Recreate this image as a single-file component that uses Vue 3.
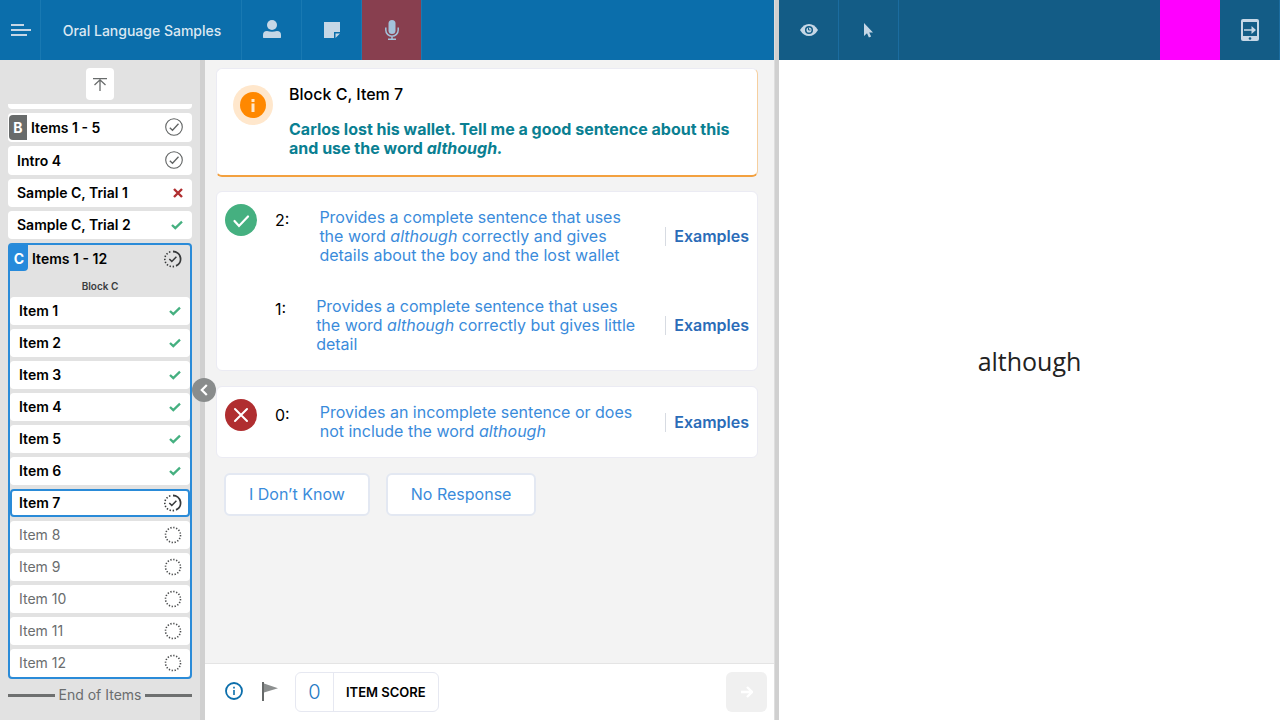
<script setup>
import { ref } from 'vue'

const earlier = [
  { label: 'Items 1 - 5', badge: 'B', state: 'complete', tall: true },
  { label: 'Intro 4', state: 'complete', tall: true },
  { label: 'Sample C, Trial 1', state: 'wrong' },
  { label: 'Sample C, Trial 2', state: 'right' }
]
const current = ref(7)
const items = Array.from({ length: 12 }, (_, i) => i + 1)
const stateOf = (n) => (n < current.value ? 'right' : n === current.value ? 'progress' : 'pending')

const positive = [
  { score: 2, before: 'Provides a complete sentence that uses the word ', after: ' correctly and gives details about the boy and the lost wallet' },
  { score: 1, before: 'Provides a complete sentence that uses the word ', after: ' correctly but gives little detail' }
]
const negative = [{ score: 0, before: 'Provides an incomplete sentence or does not include the word ', after: '' }]
const groups = [
  { kind: 'good', rows: positive },
  { kind: 'bad', rows: negative }
]
</script>

<template>
  <div class="page">
    <div class="examiner">
      <header class="bar">
        <button class="cell menu" aria-label="Menu">
          <svg width="20" height="12" viewBox="0 0 20 12"><path d="M0 1h13M0 6h20M0 11h16" stroke="#c6d7e6" stroke-width="2" /></svg>
        </button>
        <h1 class="cell title">Oral Language Samples</h1>
        <button class="cell" aria-label="Examinee">
          <svg width="18" height="20" viewBox="0 0 18 20" fill="#c6d7e6"><circle cx="9" cy="5" r="5" /><path d="M0 17.500V15Q0 11 4 11Q9 12.500 14 11Q18 11 18 15V17.500Q17.500 18 17 18H1Q.5 18 0 17.500z" /></svg>
        </button>
        <button class="cell" aria-label="Notes">
          <svg width="16" height="16" viewBox="0 0 16 16" fill="#c6d7e6"><path d="M0 0h16v10h-6v6H0z" /><path d="M11.500 11.500H16L11.500 16z" /></svg>
        </button>
        <button class="cell mic" aria-label="Record">
          <svg width="14" height="20" viewBox="0 0 14 20"><rect x="3.500" y="0" width="7" height="14" rx="3.500" fill="#a3c3dc" /><path d="M.8 7.500v2.500a6.200 6.200 0 0 0 12.400 0V7.500M7 16v3M3 19.200h8" fill="none" stroke="#a3c3dc" stroke-width="1.500" /></svg>
        </button>
      </header>

      <div class="body">
        <nav class="side" aria-label="Items">
          <button class="to-top" aria-label="Scroll to top">
            <svg width="14" height="13" viewBox="0 0 14 13" fill="none" stroke="#686b6b" stroke-width="1.300"><path d="M0 .7h14M7 13V2M1.500 7 7 1.800 12.500 7" /></svg>
          </button>
          <div class="list">
            <div class="sliver"></div>
            <button v-for="e in earlier" :key="e.label" class="entry" :class="{ tall: e.tall, badged: e.badge }">
              <span v-if="e.badge" class="badge">{{ e.badge }}</span>
              <span>{{ e.label }}</span>
              <svg v-if="e.state === 'complete'" class="mark" width="18" height="18" viewBox="0 0 18 18" fill="none" stroke="#606363"><circle cx="9" cy="9" r="8.300" stroke-width="1.100" /><path d="m4.800 9.700 2.700 2.600 6-6.500" stroke-width="1.300" /></svg>
              <svg v-else-if="e.state === 'wrong'" class="mark" width="10" height="10" viewBox="0 0 10 10"><path d="m1 1 8 8M9 1 1 9" stroke="#b02e30" stroke-width="2.400" /></svg>
              <svg v-else class="mark" width="12" height="10" viewBox="0 0 12 10"><path d="m1 5 3.300 3.200L11 1.700" fill="none" stroke="#45b080" stroke-width="2.300" /></svg>
            </button>
            <section class="group">
              <button class="group-head">
                <span class="badge">C</span>
                <span>Items 1 - 12</span>
                <svg class="mark" width="18" height="18" viewBox="0 0 18 18" fill="none" stroke="#37393a"><path d="M9 1.500a7.500 7.500 0 0 1 3 14.400" stroke-width="1.800" /><path d="M10 16.400A7.500 7.500 0 1 1 8 1.600" stroke-width="1.600" stroke-dasharray="1.400 1.700" /><path d="m5.300 9 2.500 2.400 4.600-4.700" stroke-width="1.500" /></svg>
              </button>
              <h2 class="group-name">Block C</h2>
              <button v-for="n in items" :key="n" class="entry inner" :class="stateOf(n)" @click="current = n">
                <span>Item {{ n }}</span>
                <svg v-if="stateOf(n) === 'right'" class="mark" width="12" height="10" viewBox="0 0 12 10"><path d="m1 5 3.300 3.200L11 1.700" fill="none" stroke="#45b080" stroke-width="2.300" /></svg>
                <svg v-else-if="stateOf(n) === 'progress'" class="mark" width="18" height="18" viewBox="0 0 18 18" fill="none" stroke="#37393a"><path d="M9 1.500a7.500 7.500 0 0 1 3 14.400" stroke-width="1.800" /><path d="M10 16.400A7.500 7.500 0 1 1 8 1.600" stroke-width="1.600" stroke-dasharray="1.400 1.700" /><path d="m5.300 9 2.500 2.400 4.600-4.700" stroke-width="1.500" /></svg>
                <svg v-else class="mark" width="18" height="18" viewBox="0 0 18 18"><circle cx="9" cy="9" r="7.500" fill="none" stroke="#4b4d4e" stroke-width="1.600" stroke-dasharray="1.300 1.645" /></svg>
              </button>
            </section>
            <p class="end">End of Items</p>
          </div>
        </nav>
        <div class="divider">
          <button class="collapse" aria-label="Collapse item list">
            <svg width="8" height="12" viewBox="0 0 8 12"><path d="M6.800 1 1.800 6l5 5" fill="none" stroke="#fff" stroke-width="2.200" /></svg>
          </button>
        </div>

        <main class="main">
          <div class="content">
            <section class="card prompt">
              <svg class="info" width="40" height="40" viewBox="0 0 40 40"><circle cx="20" cy="20" r="20" fill="#ffe7cc" /><circle cx="20" cy="20" r="13" fill="#ff8800" /><path d="M18.500 14h3v3h-3zM18.500 18.500h3V27h-3z" fill="#ffe7cc" /></svg>
              <div>
                <h2>Block C, Item 7</h2>
                <p>Carlos lost his wallet. Tell me a good sentence about this and use the word <em>although.</em></p>
              </div>
            </section>

            <section v-for="g in groups" :key="g.kind" class="card scores">
              <svg v-if="g.kind === 'good'" class="verdict" width="32" height="32" viewBox="0 0 32 32"><circle cx="16" cy="16" r="16" fill="#45b080" /><path d="m9.500 17 4.500 5 9-9.500" fill="none" stroke="#fff" stroke-width="2.200" stroke-linecap="round" /></svg>
              <svg v-else class="verdict" width="32" height="32" viewBox="0 0 32 32"><circle cx="16" cy="16" r="16" fill="#b02e30" /><path d="m10 10 12 12M22 10 10 22" fill="none" stroke="#fff" stroke-width="2" stroke-linecap="round" /></svg>
              <div class="rows">
                <div v-for="r in g.rows" :key="r.score" class="row">
                  <button class="choice">
                    <span class="num">{{ r.score }}:</span>
                    <span class="desc">{{ r.before }}<em>although</em>{{ r.after }}</span>
                  </button>
                  <a href="#" class="examples">Examples</a>
                </div>
              </div>
            </section>

            <div class="responses">
              <button>I Don’t Know</button>
              <button>No Response</button>
            </div>
          </div>

          <footer class="foot">
            <button class="plain" aria-label="Information">
              <svg width="18" height="18" viewBox="0 0 18 18"><circle cx="9" cy="9" r="8" fill="none" stroke="#0b6eab" stroke-width="1.800" /><path d="M8.200 4.800h1.600v1.700H8.200zM8.200 8h1.600v5H8.200z" fill="#0b6eab" /></svg>
            </button>
            <button class="plain" aria-label="Flag item">
              <svg width="16" height="19" viewBox="0 0 16 19"><path d="M0 0h2v19H0z" fill="#666969" /><path d="M2 1.500 16 6.200 2 10.500z" fill="#8c8f8f" /></svg>
            </button>
            <div class="total"><span class="value">0</span><span class="caption">ITEM SCORE</span></div>
            <button class="next" aria-label="Next item" disabled>
              <svg width="12" height="12" viewBox="0 0 12 12"><path d="M0 6h11M6 1l5 5-5 5" fill="none" stroke="#fff" stroke-width="2.400" /></svg>
            </button>
          </footer>
        </main>
      </div>
    </div>

    <div class="splitter"></div>

    <div class="examinee">
      <header class="bar dark">
        <button class="cell" aria-label="Show examinee view">
          <svg width="18" height="12" viewBox="0 0 18 12"><path d="M0 6Q3.500 0 9 0t9 6q-3.500 6-9 6T0 6z" fill="#c6d7e6" /><circle cx="9" cy="6" r="3.300" fill="none" stroke="#135c86" stroke-width="1.500" /><path d="M8.500 3.500V6H10.500" fill="none" stroke="#135c86" stroke-width="1" /></svg>
        </button>
        <button class="cell" aria-label="Pointer">
          <svg width="9" height="15" viewBox="0 0 9 15"><path d="M0 0v13l3-2.800L4.900 14.500l2.200-.9L5.200 9.500H9z" fill="#c6d7e6" /></svg>
        </button>
        <div class="swatch"></div>
        <button class="cell last" aria-label="Send to tablet">
          <svg width="18" height="22" viewBox="0 0 18 22"><rect width="18" height="22" rx="2" fill="#c6d7e6" /><path d="M2 3h14v14H2z" fill="#135c86" /><path d="M3 10.200h7.500V7l4.500 4-4.500 4v-3.200H3z" fill="#c6d7e6" /><circle cx="9" cy="19.500" r="1.300" fill="#135c86" /></svg>
        </button>
      </header>
      <div class="stimulus">although</div>
    </div>
  </div>
</template>

<style>
body { margin: 0; }
</style>

<style scoped>
.page, .page * { box-sizing: border-box; }
.page {
  display: flex;
  height: 100vh;
  overflow: hidden;
  background: #fff;
  color: #000;
  font-family: Inter, "Liberation Sans", sans-serif;
}
button { margin: 0; padding: 0; border: 0; background: none; color: inherit; font: inherit; cursor: pointer; }
h1, h2, p { margin: 0; }
svg { display: block; flex: none; }
.examiner { flex: 774; min-width: 0; display: flex; flex-direction: column; }
.splitter { width: 5px; flex: none; background: #d0d0d0; border-left: 1px solid #dedede; }
.examinee { flex: 501; min-width: 0; display: flex; flex-direction: column; }

.bar { display: flex; flex: none; height: 60px; background: #0b6eab; }
.cell { display: flex; align-items: center; justify-content: center; width: 60px; border-right: 1px solid #1979b2; }
.menu { width: 41px; padding-left: 2px; }
.title { width: 201px; padding-left: 2px; font-size: 14px; font-weight: 500; color: #dce8f2; }
.mic { background: #883f4f; }
.dark { background: #135c86; }
.dark .cell { border-color: #1b6c9f; }
.swatch { width: 60px; margin-left: auto; background: #f0f; }

.body { flex: 1; min-height: 0; display: flex; }
.side { width: 200px; flex: none; padding: 8px 8px 0; background: #e2e2e2; overflow: hidden; }
.to-top { display: flex; align-items: center; justify-content: center; width: 28px; height: 32px; margin: 0 auto 4px; border-radius: 4px; background: #fff; }
.list { display: flex; flex-direction: column; gap: 4px; }
.sliver { height: 5px; border-radius: 0 0 4px 4px; background: #fff; }
.entry {
  display: flex;
  align-items: center;
  flex: none;
  height: 28px;
  padding: 0 9px 1px 9px;
  border-radius: 4px;
  background: #fff;
  font-size: 14px;
  font-weight: 600;
  text-align: left;
}
.tall { height: 29px; }
.mark { margin-left: auto; }
.badge { display: flex; align-items: center; justify-content: center; width: 18px; height: 25px; margin-right: 4px; border-radius: 4px 0 0 4px; background: #686b6b; color: #fff; font-weight: 700; }
.badged { padding-left: 1px; }
.group { display: flex; flex-direction: column; gap: 4px; border: 2px solid #2a8bd8; border-radius: 4px; }
.group-head { display: flex; align-items: center; height: 28px; padding: 0 8px 1px 0; font-size: 14px; font-weight: 600; }
.group-head .badge { height: 26px; align-self: flex-start; border-radius: 0 0 4px 0; background: #268adb; }
.group-name { height: 16px; font-size: 10px; line-height: 18px; font-weight: 600; text-align: center; color: #3b3d3e; }
.inner.progress { padding: 0 6px 1px 7px; border: 2px solid #2a8bd8; }
.inner.pending { padding-right: 8px; font-weight: 400; color: #6a6d6e; }
.end { display: flex; align-items: center; gap: 4px; margin-top: 3px; font-size: 14px; line-height: 18px; color: #6a6d6e; }
.end::before, .end::after { content: ""; flex: 1; height: 3px; background: #6e7070; }

.divider { position: relative; width: 5px; flex: none; background: #d0d0d0; }
.collapse {
  position: absolute;
  top: 50%;
  left: 4px;
  z-index: 1;
  display: flex;
  align-items: center;
  justify-content: center;
  width: 24px;
  height: 24px;
  border-radius: 50%;
  background: #898c8c;
  transform: translate(-50%, -50%);
}

.main { flex: 1; min-width: 0; display: flex; flex-direction: column; background: #f3f3f3; font-size: 16px; line-height: 19px; }
.content { flex: 1; min-height: 0; display: flex; flex-direction: column; gap: 15px; padding: 8px 16px 8px 11px; }
.card { display: flex; border: 1px solid #ebebf3; border-radius: 6px; background: #fff; }
.prompt { gap: 16px; margin-bottom: -1px; padding: 16px 20px 17px 16px; border-bottom: 2px solid #f3a13f; border-right-color: #f6cf9f; }
.prompt h2 { margin-bottom: 16px; font-size: 16px; font-weight: 500; }
.prompt p { font-weight: 700; color: #0a7f92; }
.scores { padding: 0 8px; }
.verdict { margin-top: 12px; }
.rows { flex: 1; margin-left: 18px; }
.row { display: flex; align-items: center; padding: 16px 0; }
.choice { display: flex; align-items: flex-start; gap: 30px; flex: 1; text-align: left; }
.num { padding-top: 3px; }
.desc { flex: 1; padding-right: 24px; color: #3a8bdb; }
.examples { padding-left: 8px; border-left: 1px solid #d7dbe2; font-weight: 600; color: #2b6cb8; text-decoration: none; }
.responses { display: flex; gap: 16px; padding-left: 8px; }
.responses button { height: 43px; padding: 0 23px; border: 2px solid #e3e8f2; border-radius: 6px; background: #fff; color: #3a8bdb; }

.foot { display: flex; align-items: center; height: 57px; flex: none; padding: 0 7px 0 20px; border-top: 1px solid #e4e4e4; background: #fff; }
.plain { padding-bottom: 2px; margin-right: 19px; }
.plain + .plain { margin-right: 17px; }
.total { display: flex; height: 40px; border: 1px solid #e6e8f1; border-radius: 6px; }
.value { display: flex; align-items: center; justify-content: center; width: 38px; border-right: 1px solid #e6e8f1; font-size: 20px; font-weight: 300; color: #1f7ac4; }
.caption { display: flex; align-items: center; padding: 0 12px; font-size: 13px; font-weight: 600; }
.next { display: flex; align-items: center; justify-content: center; width: 41px; height: 40px; margin-left: auto; border-radius: 6px; background: #f0f0f0; cursor: default; }

.stimulus { flex: 1; display: flex; align-items: center; justify-content: center; padding-bottom: 58px; font-family: "Open Sans", "Noto Sans", sans-serif; font-size: 25px; color: #222; }
</style>
